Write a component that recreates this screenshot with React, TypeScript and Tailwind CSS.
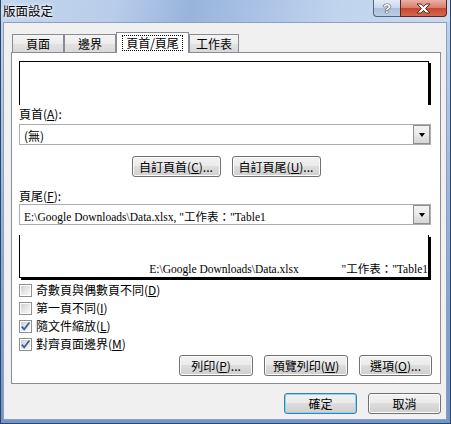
import React from "react";

const ui = "font-['Noto_Sans_CJK_TC','Liberation_Sans',sans-serif] text-[12px] leading-[16px] text-black";
const serif = "font-['Liberation_Serif','Noto_Sans_CJK_TC',serif] text-[11.5px] leading-[14px] text-black whitespace-nowrap";

function Btn({ children, w, def }: { children: React.ReactNode; w: string; def?: boolean }) {
  return (
    <div
      className={`${w} flex h-[21px] items-center justify-center rounded-[3px] border bg-[linear-gradient(#f2f2f2_0%,#ebebeb_45%,#dddddd_50%,#cfcfcf_100%)] ${
        def
          ? "border-[#3c7fb1] shadow-[inset_0_0_0_1px_#7fd6f7]"
          : "border-[#707070] shadow-[inset_0_0_0_1px_#fbfbfb]"
      } ${ui}`}
    >
      {children}
    </div>
  );
}

function Combo({ children }: { children: React.ReactNode }) {
  return (
    <div className="flex h-[21px] w-[412px] items-center border border-[#abadb3] bg-white">
      <div className="min-w-0 flex-1 overflow-hidden pl-[4px]">{children}</div>
      <div className="flex h-[19px] w-[17px] items-center justify-center border border-[#8e8f8f] bg-[linear-gradient(#f4f4f4_0%,#e8e8e8_50%,#d6d6d6_100%)]">
        <div className="h-0 w-0 border-x-[3.5px] border-t-[4px] border-x-transparent border-t-black" />
      </div>
    </div>
  );
}

function Check({ checked, children }: { checked?: boolean; children: React.ReactNode }) {
  return (
    <div className="flex h-[18px] items-center gap-[4px]">
      <div className="h-[13px] w-[13px] border border-[#8e8f8f] bg-white p-[1px]">
        <div className="flex h-full w-full items-center justify-center bg-[linear-gradient(135deg,#cfcfcf_0%,#e6e6e6_50%,#f7f7f7_100%)]">
          {checked && (
            <svg width="11" height="11" viewBox="0 0 11 11" className="-m-[1px] shrink-0">
              <polyline points="1.8,5.6 4.2,8.3 9.4,1.6" fill="none" stroke="#3a5d96" strokeWidth="1.7" />
            </svg>
          )}
        </div>
      </div>
      <span className={ui}>{children}</span>
    </div>
  );
}

function Tab({ label, w }: { label: string; w: string }) {
  return (
    <div
      className={`${w} flex h-[18px] items-center justify-center border border-b-0 border-[#898c95] bg-[linear-gradient(#f4f4f4_0%,#ececec_50%,#e2e2e2_51%,#d9d9d9_100%)] ${ui}`}
    >
      {label}
    </div>
  );
}

export default function App() {
  return (
    <div className="flex h-[424px] w-[451px] flex-col border-x border-b border-[#2c4468] bg-[linear-gradient(180deg,#c2d4ed_0%,#a9c1e4_30%,#86a5d3_70%,#7196cc_100%)]">
      {/* title bar */}
      <div className="flex h-[22px] shrink-0 items-start justify-between bg-[linear-gradient(100deg,#c3d5ee_0%,#b9cdea_25%,#98b4dc_42%,#a7c0e4_55%,#c1d4ee_75%,#c9daf0_100%)]">
        <div className="pl-[2px] pt-[3px] font-['Noto_Sans_CJK_TC',sans-serif] text-[12.5px] leading-[16px] text-black [text-shadow:0_0_5px_#fff,0_0_3px_#fff]">
          版面設定
        </div>
        <div className="mr-[3px] flex h-[17px]">
          <div className="flex w-[27px] items-center justify-center rounded-bl-[4px] border border-t-0 border-r-0 border-[#4f6484] bg-[linear-gradient(#e3ebf6_0%,#cbd8ec_48%,#aebfdc_52%,#bccde6_100%)] font-['Liberation_Sans',sans-serif] text-[13px] font-bold leading-[13px] text-white [text-shadow:0_0_1px_#333,0_0_1px_#333,0_0_1px_#333]">
            ?
          </div>
          <div className="flex w-[47px] items-center justify-center rounded-br-[4px] border border-t-0 border-[#5a2620] bg-[linear-gradient(#eab0a6_0%,#dc7c6c_48%,#c9452f_52%,#d46a4f_100%)]">
            <svg width="15" height="11" viewBox="0 0 15 11">
              <path
                d="M1 1 H5 L7.5 3.6 L10 1 H14 L9.6 5.5 L14 10 H10 L7.5 7.4 L5 10 H1 L5.4 5.5 Z"
                fill="#fff"
                stroke="#5b2a24"
                strokeWidth="1"
                strokeLinejoin="round"
              />
            </svg>
          </div>
        </div>
      </div>

      <div className="flex-1 pb-[3px] pl-[2px] pr-[3px]">
        <div className="flex h-full flex-col border border-[#8d9fba] bg-[#f0f0f0] pb-[5px] pl-[7px] pr-[5px] pt-[9px]">
          {/* tabs */}
          <div className="flex h-[20px] items-end pl-[1px]">
            <Tab label="頁面" w="w-[52px]" />
            <Tab label="邊界" w="w-[52px]" />
            <div className={`relative z-10 -mb-[1px] flex h-[21px] w-[73px] justify-center border border-b-0 border-[#898c95] bg-white pt-[2px] ${ui}`}>
              <span className="h-[16px] px-[4px] outline-dotted outline-1 outline-black -outline-offset-1">頁首/頁尾</span>
            </div>
            <Tab label="工作表" w="w-[50px]" />
          </div>

          {/* panel */}
          <div className="flex h-[332px] flex-col border border-[#898c95] bg-white px-[7px]">
            <div className="mt-[8px] h-[44px] w-[412px] shrink-0 overflow-hidden pr-[2px]">
              <div className="h-full border-x border-t border-black bg-white shadow-[2px_2px_0_0_#000]" />
            </div>

            <div className={`mt-[1px] ${ui}`}>
              頁首(<u>A</u>):
            </div>
            <div className="mt-[2px]">
              <Combo>
                <span className={ui}>(無)</span>
              </Combo>
            </div>

            <div className="mt-[11px] flex justify-center gap-[11px]">
              <Btn w="w-[89px]">
                自訂頁首(<u>C</u>)...
              </Btn>
              <Btn w="w-[89px]">
                自訂頁尾(<u>U</u>)...
              </Btn>
            </div>

            <div className={`mt-[11px] ${ui}`}>
              頁尾(<u>F</u>):
            </div>
            <Combo>
              <span className={serif}>E:\Google Downloads\Data.xlsx, "工作表："Table1</span>
            </Combo>

            <div className="mt-[10px] h-[45px] w-[412px] shrink-0 pb-[2px] pr-[2px]">
              <div className="grid h-full grid-cols-[1fr_auto_1fr] items-end border-x border-b border-black bg-white pb-[1px] shadow-[2px_2px_0_0_#000]">
                <span />
                <span className={serif}>E:\Google Downloads\Data.xlsx</span>
                <span className={`text-right ${serif}`}>"工作表："Table1</span>
              </div>
            </div>

            <div className="mt-[1px] flex flex-col">
              <Check>
                奇數頁與偶數頁不同(<u>D</u>)
              </Check>
              <Check>
                第一頁不同(<u>I</u>)
              </Check>
              <Check checked>
                隨文件縮放(<u>L</u>)
              </Check>
              <Check checked>
                對齊頁面邊界(<u>M</u>)
              </Check>
            </div>

            <div className="mt-[2px] flex justify-end gap-[11px] pr-[1px]">
              <Btn w="w-[74px]">
                列印(<u>P</u>)...
              </Btn>
              <Btn w="w-[84px]">
                預覽列印(<u>W</u>)
              </Btn>
              <Btn w="w-[73px]">
                選項(<u>O</u>)...
              </Btn>
            </div>
          </div>

          {/* dialog buttons */}
          <div className="mt-[9px] flex justify-end gap-[11px]">
            <Btn w="w-[73px]" def>
              確定
            </Btn>
            <Btn w="w-[73px]">取消</Btn>
          </div>
        </div>
      </div>
    </div>
  );
}
